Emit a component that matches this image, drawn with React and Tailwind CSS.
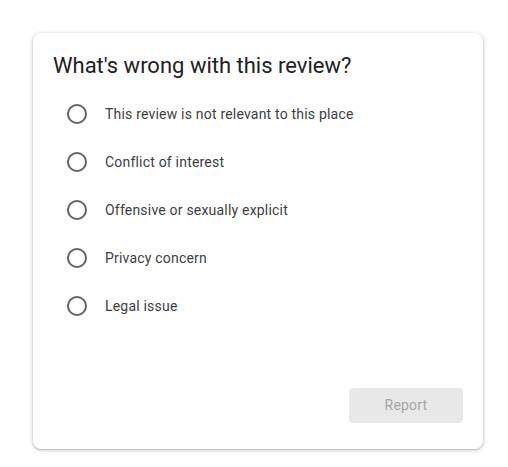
const reasons = [
  "This review is not relevant to this place",
  "Conflict of interest",
  "Offensive or sexually explicit",
  "Privacy concern",
  "Legal issue",
];

export default function App() {
  return (
    <div className="w-[508px] h-[467px] bg-white pt-[33px] pl-[33px] font-['Roboto',sans-serif]">
      <div className="w-[450px] h-[416px] flex flex-col rounded-lg bg-white shadow-[0_1px_2px_rgba(60,64,67,0.3),0_1px_4px_1px_rgba(60,64,67,0.15)]">
        <h2 className="pt-[19px] pl-[20px] text-[22px] leading-[28px] text-[#202124]">
          What's wrong with this review?
        </h2>
        <div className="mt-[10px] flex flex-col">
          {reasons.map((r) => (
            <label key={r} className="flex items-center h-[48px] pl-[34px] cursor-pointer">
              <span className="w-[20px] h-[20px] rounded-full border-2 border-[#5f6368]" />
              <span className="ml-[18px] text-[14px] tracking-[0.2px] text-[#3c4043]">{r}</span>
            </label>
          ))}
        </div>
        <div className="mt-auto flex justify-end pr-[20px] pb-[26px]">
          <button
            disabled
            className="w-[114px] h-[35px] rounded bg-[#e8e8e8] text-[14px] tracking-[0.2px] text-[#a6a6a6]"
          >
            Report
          </button>
        </div>
      </div>
    </div>
  );
}
